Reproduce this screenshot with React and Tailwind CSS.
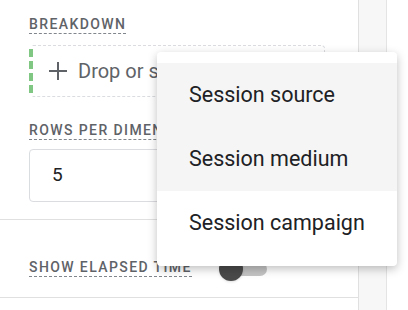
import { useState } from "react";

const Label = ({ children }) => (
    <span className="block w-fit text-[14px] leading-[18px] font-medium tracking-[0.1em] text-[#5f6368] border-b border-dashed border-[#80868b]">
        {children}
    </span>
);

const App = () => {
    const [elapsed] = useState(false);
    const options = ["Session source", "Session medium", "Session campaign"];

    return (
        <div className="relative flex w-[408px] h-[310px] overflow-hidden bg-white" style={{ fontFamily: "Roboto, 'Liberation Sans', sans-serif" }}>
            <div className="w-[359px] shrink-0 border-r border-[#e0e0e0]">
                <div className="px-[29px] pr-[33px] pt-[15px] pb-[17px]">
                    <Label>BREAKDOWN</Label>
                    <div className="mt-[11px] h-[52px] flex items-center rounded-[4px] border border-dashed border-[#dadce0] border-l-[4px] border-l-[#81c784]">
                        <svg width="18" height="18" viewBox="0 0 18 18" className="ml-[16px]" stroke="#5f6368" strokeWidth="2">
                            <line x1="9" y1="0" x2="9" y2="18" />
                            <line x1="0" y1="9" x2="18" y2="9" />
                        </svg>
                        <span className="ml-[11px] text-[20px] text-[#5f6368]">Drop or select dimension</span>
                    </div>
                    <div className="mt-[24px]">
                        <Label>ROWS PER DIMENSION</Label>
                    </div>
                    <div className="mt-[9px] h-[53px] flex items-center rounded-[4px] border border-[#dadce0] px-[22px] text-[19px] text-[#202124]">
                        5
                    </div>
                </div>
                <div className="border-t border-[#e0e0e0] px-[29px] pt-[37px] pb-[16px] flex items-start">
                    <div className="mt-[1px]">
                        <Label>SHOW ELAPSED TIME</Label>
                    </div>
                    <div className="relative ml-[27px] w-[48px] h-[24px] flex items-center">
                        <div className={`ml-[6px] w-[42px] h-[14px] rounded-full ${elapsed ? "bg-[#a8c7fa]" : "bg-[#c4c4c4]"}`} />
                        <div className="absolute left-0 top-0 w-[24px] h-[24px] rounded-full bg-[#4a4a4a] shadow" />
                    </div>
                </div>
                <div className="border-t border-[#e0e0e0]" />
            </div>
            <div className="w-[28px] shrink-0 bg-[#f7f7f7] border-r border-[#e4e4e4]" />
            <div className="flex-1 bg-white" />

            <div className="absolute left-[157px] top-[52px] w-[240px] py-[11px] bg-white rounded-[4px] shadow-[0_3px_10px_rgba(0,0,0,0.25)]">
                {options.map((opt, i) => (
                    <div key={opt} className={`h-[64px] flex items-center pl-[32px] text-[21.5px] text-[#202124] ${i < 2 ? "bg-[#f5f5f5]" : ""}`}>
                        {opt}
                    </div>
                ))}
            </div>
        </div>
    );
};

export default App;
